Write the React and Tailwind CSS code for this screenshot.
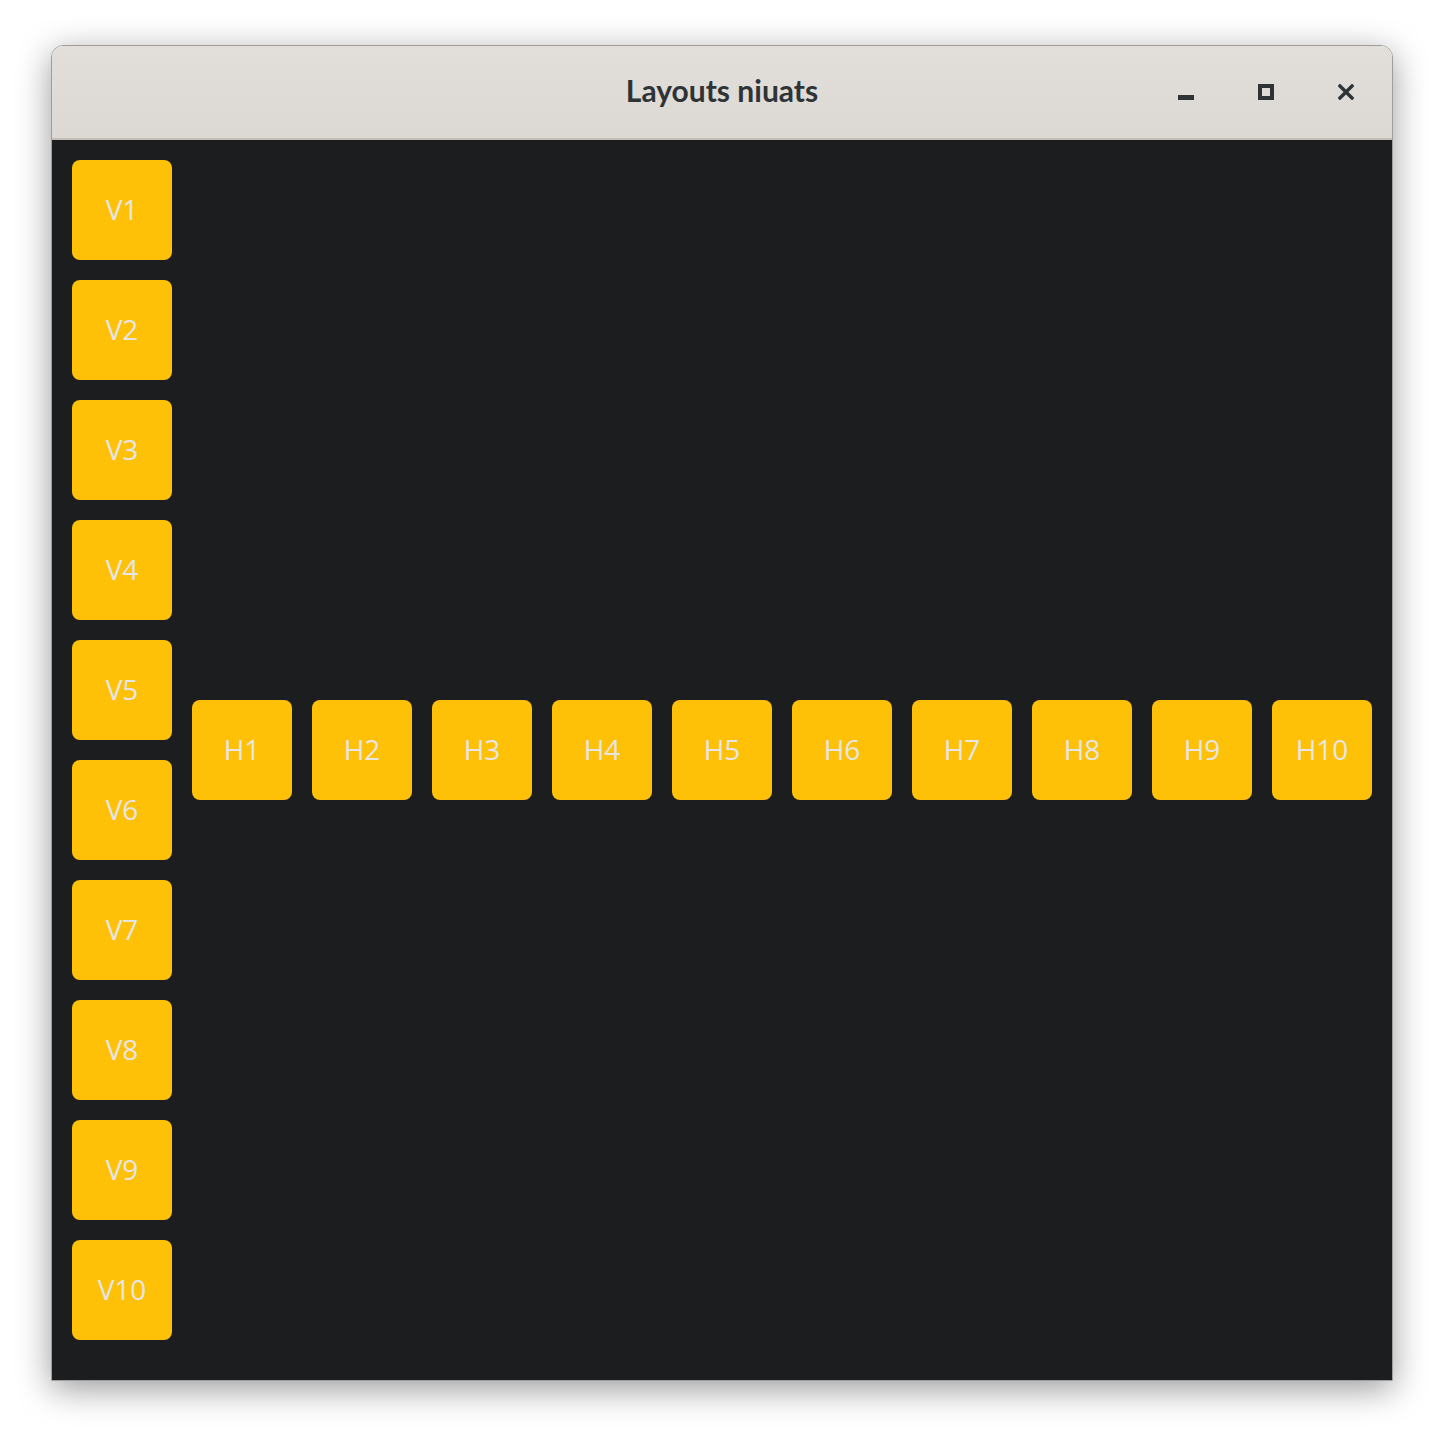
import React from "react";

const Box = ({ label }) => (
  <div className="w-[100px] h-[100px] shrink-0 rounded-[8px] bg-[#ffc107] flex items-center justify-center pb-[2px] text-[28px] text-[#e6e6e6] font-['Open_Sans',sans-serif] leading-none">
    {label}
  </div>
);

export default function App() {
  const vs = Array.from({ length: 10 }, (_, i) => `V${i + 1}`);
  const hs = Array.from({ length: 10 }, (_, i) => `H${i + 1}`);
  return (
    <div className="w-[1444px] h-[1438px] bg-white pl-[51px] pt-[45px]">
      <div className="w-[1342px] border border-[#9e9e9e] rounded-t-[12px] shadow-[0_8px_34px_rgba(0,0,0,0.4)] overflow-hidden">
        <div className="relative h-[94px] bg-gradient-to-b from-[#e2dfdb] to-[#dcd8d3] border-b-2 border-[#c3bdb6] flex items-center justify-center">
          <span className="font-['Lato',sans-serif] font-bold text-[30px] text-[#2e3436] pb-[3px]">
            Layouts niuats
          </span>
          <div className="absolute right-[38px] top-0 h-full flex items-center gap-[64px]">
            <svg width="16" height="16" viewBox="0 0 16 16">
              <rect x="0" y="11" width="16" height="5" fill="#2e3436" />
            </svg>
            <svg width="16" height="16" viewBox="0 0 16 16">
              <rect x="2" y="2" width="12" height="12" fill="none" stroke="#2e3436" strokeWidth="4" />
            </svg>
            <svg width="16" height="16" viewBox="0 0 16 16">
              <path d="M2 2 L14 14 M14 2 L2 14" stroke="#2e3436" strokeWidth="3.4" strokeLinecap="square" />
            </svg>
          </div>
        </div>
        <div className="h-[1240px] bg-[#1c1d1f] pt-5 px-5 pb-10 flex items-center gap-5">
          <div className="flex flex-col gap-5">
            {vs.map((v) => (
              <Box key={v} label={v} />
            ))}
          </div>
          <div className="flex gap-5">
            {hs.map((h) => (
              <Box key={h} label={h} />
            ))}
          </div>
        </div>
      </div>
    </div>
  );
}
